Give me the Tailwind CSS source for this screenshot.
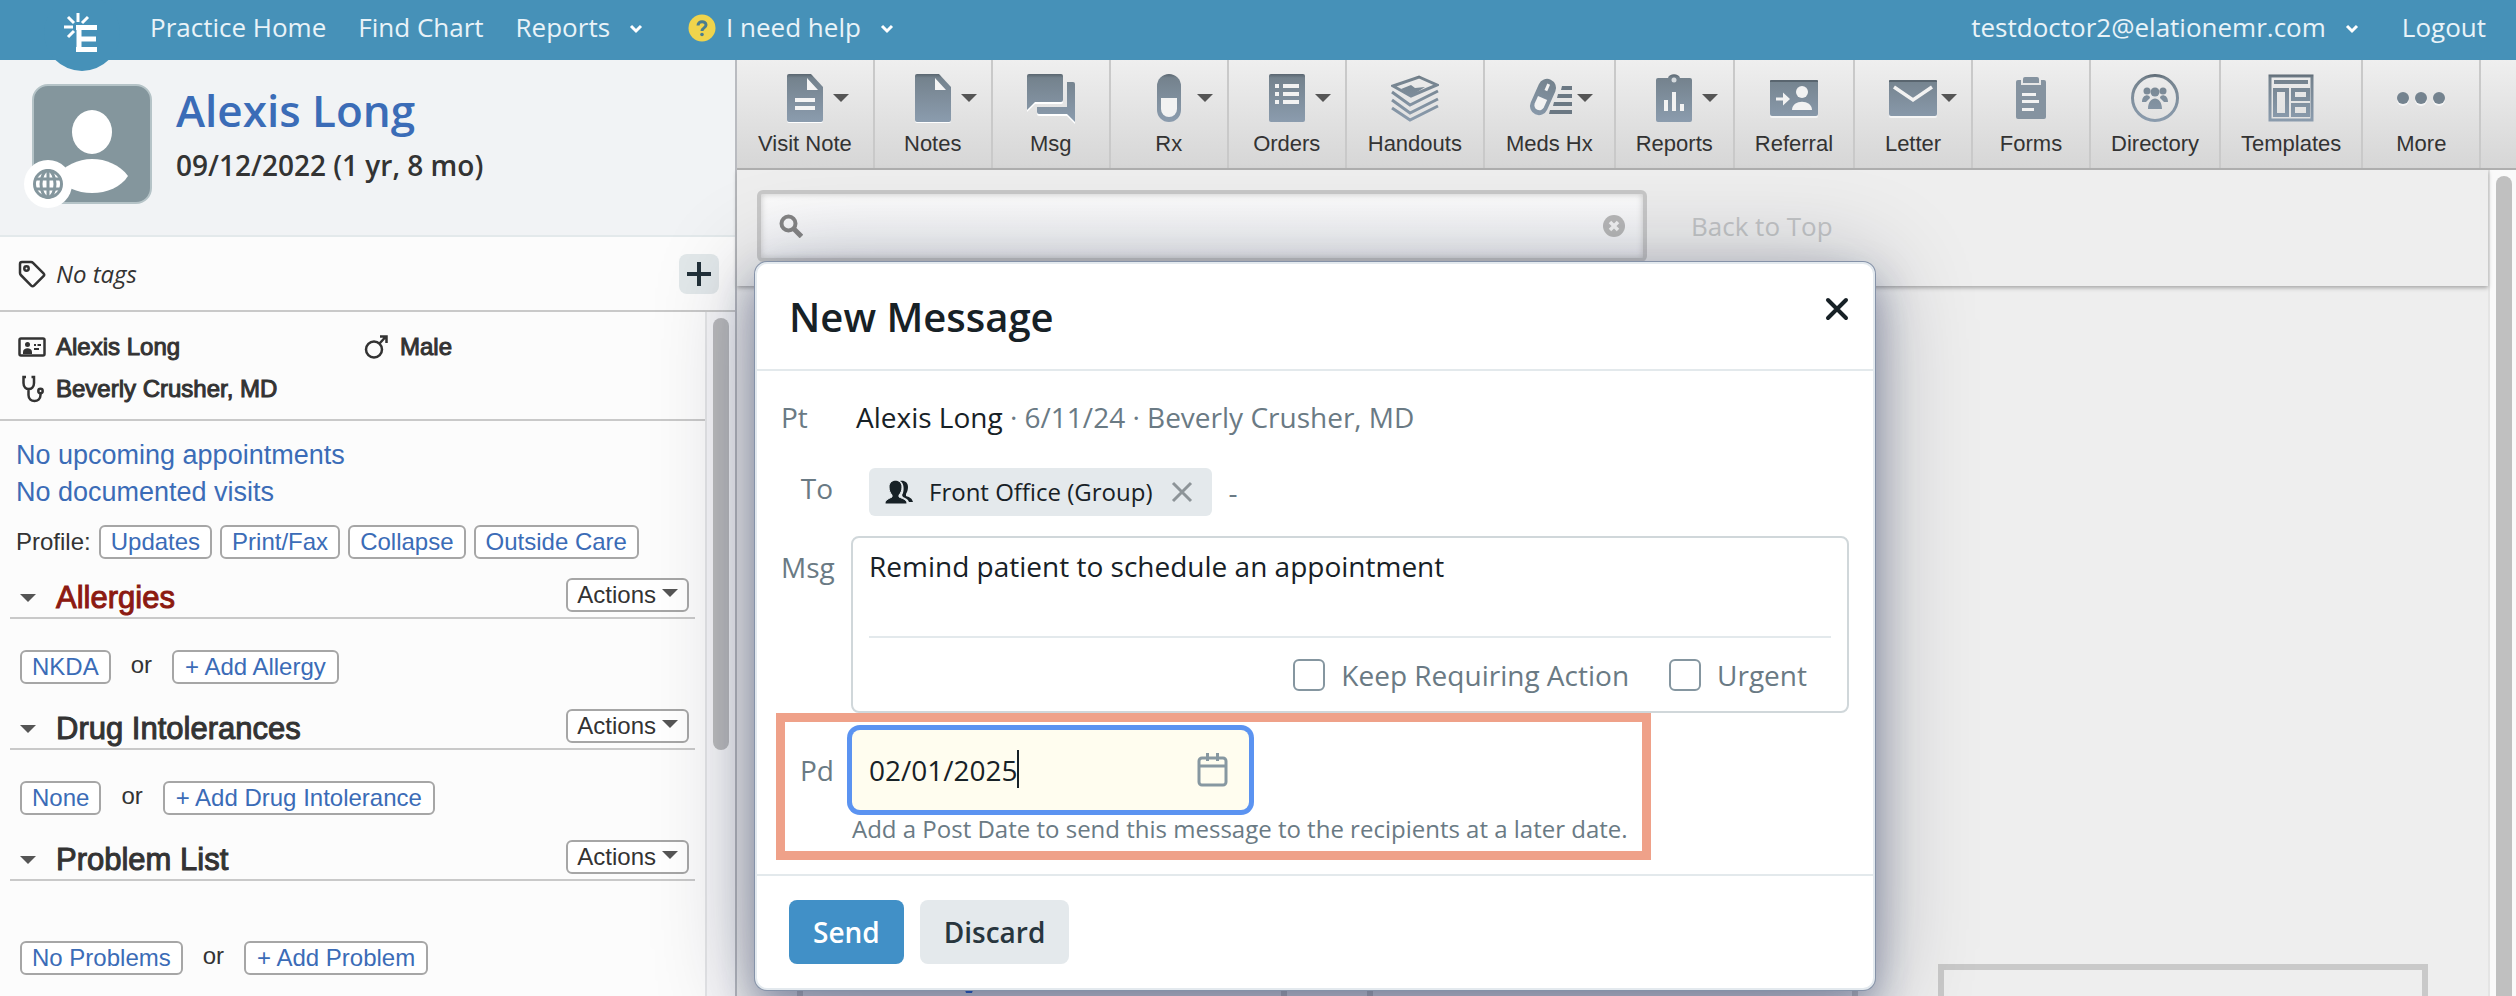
<!DOCTYPE html>
<html lang="en">
<head>
  <meta charset="UTF-8">
  <meta name="viewport" content="width=device-width, initial-scale=1.0">
  <title>Alexis Long - New Message</title>
  <script src="https://cdn.jsdelivr.net/npm/@tailwindcss/browser@4"></script>
</head>
<body class="flex flex-col h-screen overflow-hidden bg-[#eeeeee] font-['Liberation_Sans',Arial,sans-serif] text-[#333333]">

  <!-- shared icon gradient -->
  <svg class="absolute w-0 h-0" aria-hidden="true">
    <defs>
      <linearGradient id="steel" gradientUnits="userSpaceOnUse" x1="0" y1="0" x2="0" y2="48">
        <stop offset="0" stop-color="#59656f"/>
        <stop offset="0.08" stop-color="#74828d"/>
        <stop offset="1" stop-color="#8b9cae"/>
      </linearGradient>
    </defs>
  </svg>

  <!-- Top bar -->
  <header class="relative z-10 flex items-center justify-between h-15 shrink-0 bg-[#4691b8] pb-1.5 pr-[30px] pl-[150px] font-['Open_Sans',sans-serif] text-[26px] text-[#e9f3f8]">
    <a href="#" aria-label="Home" class="absolute left-11 -top-[5px] size-[76px] rounded-full bg-[#4691b8]">
      <svg class="size-full" viewBox="0 0 76 76" fill="none" stroke="#fff">
        <path d="M35 57V30M32 32.500h21M35 44h17M32 54.500h21" stroke-width="5"/>
        <path d="M34 18v9M24 22l6 6M44 22l-6 6M20 32h9M30 36l-6 6" stroke-width="3"/>
      </svg>
    </a>
    <nav class="flex items-center">
      <a href="#">Practice Home</a>
      <a href="#" class="ml-8">Find Chart</a>
      <a href="#" class="ml-8 flex items-center">Reports
        <svg class="ml-[18px] mt-1 w-4 h-3" viewBox="0 0 16 12" fill="none" stroke="#fff" stroke-width="3"><path d="M3 3l5 5 5-5"/></svg>
      </a>
      <a href="#" class="ml-11 flex items-center">
        <svg class="mt-0.5 mr-2.5 size-7" viewBox="0 0 28 28"><circle cx="14" cy="14" r="13.5" fill="#f0d44c"/><path d="M10 11.5c0-5 8-5 8-.5 0 3-4 2.800-4 6" fill="none" stroke="#4b7d8f" stroke-width="3"/><circle cx="14" cy="20.500" r="1.800" fill="#4b7d8f"/></svg>
        I need help
        <svg class="ml-[18px] mt-1 w-4 h-3" viewBox="0 0 16 12" fill="none" stroke="#fff" stroke-width="3"><path d="M3 3l5 5 5-5"/></svg>
      </a>
    </nav>
    <nav class="flex items-center">
      <a href="#" class="flex items-center">testdoctor2@elationemr.com
        <svg class="ml-[18px] mt-1 w-4 h-3" viewBox="0 0 16 12" fill="none" stroke="#fff" stroke-width="3"><path d="M3 3l5 5 5-5"/></svg>
      </a>
      <a href="#" class="ml-[42px]">Logout</a>
    </nav>
  </header>

  <div class="flex flex-1 min-h-0">

    <!-- Patient sidebar -->
    <aside class="flex flex-col w-[737px] shrink-0 bg-[#fcfcfc] border-r-2 border-[#b9bbc0]">
      <div class="flex h-[177px] shrink-0 bg-[#f1f3f5] border-b-2 border-[#e3e9eb] pt-6 pl-8">
        <div class="relative size-[120px]">
          <svg class="size-full" viewBox="0 0 120 120">
            <rect x="1" y="1" width="118" height="118" rx="15" fill="#84969d" stroke="#b5c3c7" stroke-width="2"/>
            <ellipse cx="60" cy="48" rx="20" ry="22" fill="#fff"/>
            <path d="M24 92c8-10 22-17 36-17s28 6 36 17c-7 11-21 17-36 17s-28-6-36-17z" fill="#fff"/>
          </svg>
          <svg class="absolute -left-2 top-[76px] size-12" viewBox="0 0 48 48" fill="none" stroke="#84969d" stroke-width="3">
            <circle cx="24" cy="24" r="24" fill="#fff" stroke="none"/>
            <circle cx="24" cy="24" r="13.500"/><ellipse cx="24" cy="24" rx="7" ry="13.500"/><path d="M11 19h26M11 29h26M24 10v28"/>
          </svg>
        </div>
        <div class="ml-6 font-['Open_Sans',sans-serif] font-semibold">
          <h1 class="text-[44px] leading-[52px] text-[#3b6cb7]">Alexis Long</h1>
          <p class="mt-[11px] text-[28px] leading-9">09/12/2022 (1 yr, 8 mo)</p>
        </div>
      </div>

      <div class="flex items-center h-[75px] shrink-0 border-b-2 border-[#c9c9c9] pl-[18px] pr-4 font-['Open_Sans',sans-serif]">
        <svg class="size-7" viewBox="0 0 28 28" fill="none" stroke="#333" stroke-width="2.500"><path d="M2 4a2 2 0 0 1 2-2h9c1 0 1.500.3 2 .8l10.500 10.500a2 2 0 0 1 0 2.800l-9.500 9.500a2 2 0 0 1-2.800 0L2.800 15C2.300 14.500 2 14 2 13z"/><circle cx="8.500" cy="8.500" r="2.200"/></svg>
        <span class="ml-2.5 flex-1 text-[24px] italic">No tags</span>
        <button type="button" aria-label="Add tag" class="flex items-center justify-center size-10 rounded-lg bg-[#e2e8ea]">
          <svg class="size-6" viewBox="0 0 24 24" stroke="#22313a" stroke-width="4"><path d="M12 0v24M0 12h24"/></svg>
        </button>
      </div>

      <div class="flex flex-1 min-h-0">
        <div class="flex-1 overflow-hidden">
          <div class="grid grid-cols-[346px_1fr] border-b-2 border-[#c9c9c9] pt-3.5 pb-[9px] pl-[18px] text-[24px] leading-[42px] [-webkit-text-stroke:1px_#333333]">
            <div class="flex items-center gap-2.5">
              <svg class="w-7 h-5" viewBox="0 0 28 20" fill="none" stroke="#333" stroke-width="2.500"><rect x="1.500" y="1.500" width="25" height="17" rx="1.500"/><circle cx="9.500" cy="7.500" r="2.500" fill="#333" stroke="none"/><path d="M5 17v-2c0-5 9-5 9 0v2z" fill="#333" stroke="none"/><path d="M16 8h2M19.500 8H23M16 12h5" stroke-width="2"/></svg>
              Alexis Long
            </div>
            <div class="flex items-center gap-3">
              <svg class="size-6" viewBox="0 0 24 24" fill="none" stroke="#333" stroke-width="2.500"><circle cx="10" cy="14.500" r="8"/><path d="M15.500 8.500l6.500-7M16 1.500h6.500V8"/></svg>
              Male
            </div>
            <div class="flex items-center gap-2.5">
              <svg class="size-7" viewBox="0 0 28 28" fill="none" stroke="#333" stroke-width="2.500"><path d="M8 2H5.500v6c0 8 10.500 8 10.500 0V2H13.500M10.500 14v6c0 8 12 8 12 0v-2"/><circle cx="22.500" cy="16" r="2.200"/></svg>
              Beverly Crusher, MD
            </div>
          </div>

          <div class="flex flex-col items-start pt-4 pl-4 text-[27px] leading-[37px] text-[#3b6cb7]">
            <a href="#">No upcoming appointments</a>
            <a href="#">No documented visits</a>
          </div>
          <div class="mt-3.5 pl-4 flex items-center gap-2 text-[24px] leading-[30px]">
            <span>Profile:</span>
            <button type="button" class="h-[34px] px-2.5 border-2 border-[#a6a6a6] rounded-md bg-white text-[#3b6cb7]">Updates</button>
            <button type="button" class="h-[34px] px-2.5 border-2 border-[#a6a6a6] rounded-md bg-white text-[#3b6cb7]">Print/Fax</button>
            <button type="button" class="h-[34px] px-2.5 border-2 border-[#a6a6a6] rounded-md bg-white text-[#3b6cb7]">Collapse</button>
            <button type="button" class="h-[34px] px-2.5 border-2 border-[#a6a6a6] rounded-md bg-white text-[#3b6cb7]">Outside Care</button>
          </div>

          <section class="mt-[19px] mx-2.5 text-[24px] leading-[30px]">
            <div class="flex items-center h-[41px] border-b-2 border-[#c9c9c9] pl-2.5 pr-1.5">
              <svg class="w-4 h-2" viewBox="0 0 16 8"><path d="M0 0h16L8 8z" fill="#555"/></svg>
              <h2 class="ml-5 flex-1 text-[31px] text-[#8c1a11] [-webkit-text-stroke:1px_#8c1a11]">Allergies</h2>
              <button type="button" class="self-start flex items-center h-[34px] px-[9px] border-2 border-[#a6a6a6] rounded-md bg-white">Actions
                <svg class="ml-1.5 mb-1 w-4 h-2" viewBox="0 0 16 8"><path d="M0 0h16L8 8z" fill="#555"/></svg>
              </button>
            </div>
            <div class="mt-[31px] pl-2.5 flex items-center gap-5">
              <button type="button" class="h-[34px] px-2.5 border-2 border-[#a6a6a6] rounded-md bg-white text-[#3b6cb7]">NKDA</button>
              <span class="pb-1">or</span>
              <button type="button" class="h-[34px] px-[11px] border-2 border-[#a6a6a6] rounded-md bg-white text-[#3b6cb7]">+ Add Allergy</button>
            </div>
          </section>

          <section class="mt-[25px] mx-2.5 text-[24px] leading-[30px]">
            <div class="flex items-center h-[41px] border-b-2 border-[#c9c9c9] pl-2.5 pr-1.5">
              <svg class="w-4 h-2" viewBox="0 0 16 8"><path d="M0 0h16L8 8z" fill="#555"/></svg>
              <h2 class="ml-5 flex-1 text-[31px] [-webkit-text-stroke:1px_#333333]">Drug Intolerances</h2>
              <button type="button" class="self-start flex items-center h-[34px] px-[9px] border-2 border-[#a6a6a6] rounded-md bg-white">Actions
                <svg class="ml-1.5 mb-1 w-4 h-2" viewBox="0 0 16 8"><path d="M0 0h16L8 8z" fill="#555"/></svg>
              </button>
            </div>
            <div class="mt-[31px] pl-2.5 flex items-center gap-5">
              <button type="button" class="h-[34px] px-2.5 border-2 border-[#a6a6a6] rounded-md bg-white text-[#3b6cb7]">None</button>
              <span class="pb-1">or</span>
              <button type="button" class="h-[34px] px-[11px] border-2 border-[#a6a6a6] rounded-md bg-white text-[#3b6cb7]">+ Add Drug Intolerance</button>
            </div>
          </section>

          <section class="mt-[25px] mx-2.5 text-[24px] leading-[30px]">
            <div class="flex items-center h-[41px] border-b-2 border-[#c9c9c9] pl-2.5 pr-1.5">
              <svg class="w-4 h-2" viewBox="0 0 16 8"><path d="M0 0h16L8 8z" fill="#555"/></svg>
              <h2 class="ml-5 flex-1 text-[31px] [-webkit-text-stroke:1px_#333333]">Problem List</h2>
              <button type="button" class="self-start flex items-center h-[34px] px-[9px] border-2 border-[#a6a6a6] rounded-md bg-white">Actions
                <svg class="ml-1.5 mb-1 w-4 h-2" viewBox="0 0 16 8"><path d="M0 0h16L8 8z" fill="#555"/></svg>
              </button>
            </div>
            <div class="mt-[60px] pl-2.5 flex items-center gap-5">
              <button type="button" class="h-[34px] px-2.5 border-2 border-[#a6a6a6] rounded-md bg-white text-[#3b6cb7]">No Problems</button>
              <span class="pb-1">or</span>
              <button type="button" class="h-[34px] px-[11px] border-2 border-[#a6a6a6] rounded-md bg-white text-[#3b6cb7]">+ Add Problem</button>
            </div>
          </section>
        </div>
        <!-- sidebar scrollbar -->
        <div class="w-[30px] border-l-2 border-[#e4e5e7] bg-[#f6f6f8] pt-1.5 pl-1.5">
          <div class="w-4 h-[432px] rounded-full bg-[#bbbbbd]"></div>
        </div>
      </div>
    </aside>

    <!-- Chart area -->
    <main class="flex flex-col flex-1 min-w-0">
      <div class="flex h-[110px] shrink-0 border-b-2 border-[#afafaf] bg-linear-to-b from-[#efefef] to-[#d6d6d6] text-[22px] leading-[26px]">
        <button type="button" class="flex flex-col items-center gap-[9px] pt-3.5 px-[21px] min-w-[118px] border-r-2 border-[#c9c9c9]">
          <span class="relative size-12">
            <svg class="size-12 drop-shadow-[0_1px_0_#ffffff]" viewBox="0 0 48 48"><path d="M6 2a2 2 0 0 1 2-2h22l12 13v33a2 2 0 0 1-2 2H8a2 2 0 0 1-2-2z" fill="url(#steel)"/><path d="M26 4v12h11zM14 24h20v4H14zM14 32h20v4H14z" fill="#f4f4f4"/></svg>
            <svg class="absolute left-[52px] top-5 w-4 h-2" viewBox="0 0 16 8"><path d="M0 0h16L8 8z" fill="#555"/></svg>
          </span>
          Visit Note
        </button>
        <button type="button" class="flex flex-col items-center gap-[9px] pt-3.5 px-[21px] min-w-[118px] border-r-2 border-[#c9c9c9]">
          <span class="relative size-12">
            <svg class="size-12 drop-shadow-[0_1px_0_#ffffff]" viewBox="0 0 48 48"><path d="M6 2a2 2 0 0 1 2-2h22l12 13v33a2 2 0 0 1-2 2H8a2 2 0 0 1-2-2z" fill="url(#steel)"/><path d="M26 4v12h11z" fill="#f4f4f4"/></svg>
            <svg class="absolute left-[52px] top-5 w-4 h-2" viewBox="0 0 16 8"><path d="M0 0h16L8 8z" fill="#555"/></svg>
          </span>
          Notes
        </button>
        <button type="button" class="flex flex-col items-center gap-[9px] pt-3.5 px-[21px] min-w-[118px] border-r-2 border-[#c9c9c9]">
          <svg class="size-12 drop-shadow-[0_2px_0_#ffffff]" viewBox="0 0 48 48"><path d="M2 0h32a2 2 0 0 1 2 2v24a2 2 0 0 1-2 2H8l-8 8V2a2 2 0 0 1 2-2zM40 8h6a2 2 0 0 1 2 2v38l-8-8H12a2 2 0 0 1-2-2v-5h30z" fill="url(#steel)"/></svg>
          Msg
        </button>
        <button type="button" class="flex flex-col items-center gap-[9px] pt-3.5 px-[21px] min-w-[118px] border-r-2 border-[#c9c9c9]">
          <span class="relative size-12">
            <svg class="size-12" viewBox="0 0 48 48"><rect x="12" y="0" width="24" height="48" rx="12" fill="url(#steel)"/><path d="M16 24h16v11a8 8 0 0 1-16 0z" fill="#f2f2f2"/></svg>
            <svg class="absolute left-[52px] top-5 w-4 h-2" viewBox="0 0 16 8"><path d="M0 0h16L8 8z" fill="#555"/></svg>
          </span>
          Rx
        </button>
        <button type="button" class="flex flex-col items-center gap-[9px] pt-3.5 px-[21px] min-w-[118px] border-r-2 border-[#c9c9c9]">
          <span class="relative size-12">
            <svg class="size-12" viewBox="0 0 48 48"><rect x="6" y="0" width="36" height="48" rx="2" fill="url(#steel)"/><path d="M12 10h4v4h-4zM20 10h16v4H20zM12 18h4v4h-4zM20 18h16v4H20zM12 26h4v4h-4zM20 26h16v4H20z" fill="#f2f2f2"/></svg>
            <svg class="absolute left-[52px] top-5 w-4 h-2" viewBox="0 0 16 8"><path d="M0 0h16L8 8z" fill="#555"/></svg>
          </span>
          Orders
        </button>
        <button type="button" class="flex flex-col items-center gap-[9px] pt-3.5 px-[21px] min-w-[118px] border-r-2 border-[#c9c9c9]">
          <svg class="size-12" viewBox="0 0 48 48" fill="none" stroke="url(#steel)" stroke-width="3"><path d="M2 12L28 3l18 8-26 11z"/><path d="M10 15l10-4 4 3 10-1-14 9z" fill="url(#steel)" stroke="none"/><path d="M1 18l18 13 28-14M1 26l18 13 28-14M1 34l18 12 28-14"/></svg>
          Handouts
        </button>
        <button type="button" class="flex flex-col items-center gap-[9px] pt-3.5 px-[21px] min-w-[118px] border-r-2 border-[#c9c9c9]">
          <span class="relative size-12">
            <svg class="size-12" viewBox="0 0 48 48"><g transform="rotate(24 18 23)"><rect x="9" y="4" width="18" height="38" rx="9" fill="url(#steel)"/><path d="M13 24h10v8a5 5 0 0 1-10 0z" fill="#f2f2f2"/><path d="M18 9v7" stroke="#f2f2f2" stroke-width="3"/></g><path d="M37 12h10v4H36zM33 20h14v4H32zM29 28h18v4H28zM25 36h22v4H24z" fill="#6b7883"/></svg>
            <svg class="absolute left-[52px] top-5 w-4 h-2" viewBox="0 0 16 8"><path d="M0 0h16L8 8z" fill="#555"/></svg>
          </span>
          Meds Hx
        </button>
        <button type="button" class="flex flex-col items-center gap-[9px] pt-3.5 px-5 min-w-[118px] border-r-2 border-[#c9c9c9]">
          <span class="relative size-12">
            <svg class="size-12" viewBox="0 0 48 48"><path d="M8 4h10c1-5 11-5 12 0h10a2 2 0 0 1 2 2v40a2 2 0 0 1-2 2H8a2 2 0 0 1-2-2V6a2 2 0 0 1 2-2z" fill="url(#steel)"/><circle cx="24" cy="6" r="2.500" fill="#d5dade"/><path d="M14 26h4v11h-4zM22 18h4v19h-4zM30 30h4v7h-4z" fill="#f2f2f2"/></svg>
            <svg class="absolute left-[52px] top-5 w-4 h-2" viewBox="0 0 16 8"><path d="M0 0h16L8 8z" fill="#555"/></svg>
          </span>
          Reports
        </button>
        <button type="button" class="flex flex-col items-center gap-[9px] pt-3.5 px-5 min-w-[118px] border-r-2 border-[#c9c9c9]">
          <svg class="size-12 drop-shadow-[0_2px_0_#f5f5f5]" viewBox="0 0 48 48"><rect x="0" y="6" width="48" height="36" rx="2" fill="url(#steel)"/><path d="M0 7a1 1 0 0 1 1-1h46a1 1 0 0 1 1 1v1H0z" fill="#59656f"/><circle cx="32" cy="18" r="6" fill="#f2f2f2"/><path d="M22 36c0-11 20-11 20 0z" fill="#f2f2f2"/><path d="M6 23.500h7v-5l7 6.500-7 6.500v-5H6z" fill="#f2f2f2"/></svg>
          Referral
        </button>
        <button type="button" class="flex flex-col items-center gap-[9px] pt-3.5 px-5 min-w-[118px] border-r-2 border-[#c9c9c9]">
          <span class="relative size-12">
            <svg class="size-12 drop-shadow-[0_2px_0_#f5f5f5]" viewBox="0 0 48 48"><rect x="0" y="6" width="48" height="36" rx="2" fill="url(#steel)"/><path d="M0 7a1 1 0 0 1 1-1h46a1 1 0 0 1 1 1v1H0z" fill="#59656f"/><path d="M5 13l19 13 19-13" fill="none" stroke="#f2f2f2" stroke-width="3.500"/></svg>
            <svg class="absolute left-[52px] top-5 w-4 h-2" viewBox="0 0 16 8"><path d="M0 0h16L8 8z" fill="#555"/></svg>
          </span>
          Letter
        </button>
        <button type="button" class="flex flex-col items-center gap-[9px] pt-3.5 px-5 min-w-[118px] border-r-2 border-[#c9c9c9]">
          <svg class="size-12" viewBox="0 0 48 48"><path d="M11 6h26a2 2 0 0 1 2 2v35a2 2 0 0 1-2 2H11a2 2 0 0 1-2-2V8a2 2 0 0 1 2-2z" fill="#8593a0"/><path d="M14 6h20v5H14z" fill="#e6e6e6"/><path d="M18 3h12a2 2 0 0 1 2 2v4H16V5a2 2 0 0 1 2-2z" fill="#8593a0"/><path d="M15 19h14v3H15zM15 26h17v3H15zM15 34h12v3H15z" fill="#f2f2f2"/></svg>
          Forms
        </button>
        <button type="button" class="flex flex-col items-center gap-[9px] pt-3.5 px-5 min-w-[118px] border-r-2 border-[#c9c9c9]">
          <svg class="size-12" viewBox="0 0 48 48" fill="url(#steel)"><circle cx="24" cy="24" r="22.500" fill="none" stroke="url(#steel)" stroke-width="3"/><circle cx="24" cy="18" r="4.500"/><circle cx="16" cy="17" r="3.500"/><circle cx="32" cy="17" r="3.500"/><path d="M17 35c0-14 14-14 14 0zM11 28c0-8 8-8 8-4l-4 4zM37 28c0-8-8-8-8-4l4 4z"/></svg>
          Directory
        </button>
        <button type="button" class="flex flex-col items-center gap-[9px] pt-3.5 px-5 min-w-[118px] border-r-2 border-[#c9c9c9]">
          <svg class="size-12" viewBox="0 0 48 48" fill="none" stroke="url(#steel)" stroke-width="3"><path d="M3 2h42v44H3z"/><path d="M7 8.100L41 8" stroke-width="4"/><path d="M8 16h12v25H8zM26 16h15v9H26zM26 31h15v10H26z" stroke-width="4"/></svg>
          Templates
        </button>
        <button type="button" class="flex flex-col items-center gap-[9px] pt-3.5 px-5 min-w-[118px] border-r-2 border-[#c9c9c9]">
          <svg class="size-12 drop-shadow-[0_2px_0_#f5f5f5]" viewBox="0 0 48 48" fill="#74838f"><circle cx="6" cy="24" r="6"/><circle cx="24" cy="24" r="6"/><circle cx="42" cy="24" r="6"/></svg>
          More
        </button>
      </div>

      <div class="flex flex-1 min-h-0">
        <div class="relative flex-1 flex flex-col">
          <!-- search strip -->
          <div class="flex h-[116px] shrink-0 pt-5 pl-5 shadow-[0_2px_4px_#a8a8a8]">
            <div class="flex items-center w-[890px] h-[72px] border-4 border-[#c8c8c8] rounded-md bg-linear-to-b from-[#fcfcfc] to-[#f1f2f5] shadow-[inset_0_0_6px_#c8c8c8] px-[18px]">
              <svg class="size-6" viewBox="0 0 24 24" fill="none" stroke="#858585" stroke-width="4"><circle cx="9.500" cy="9.500" r="7"/><path d="M14.500 14.500l8 8" stroke-width="5"/></svg>
              <input type="search" aria-label="Search chart" class="flex-1 h-full px-3 text-[26px] outline-none">
              <button type="button" aria-label="Clear search">
                <svg class="size-[22px]" viewBox="0 0 22 22"><circle cx="11" cy="11" r="11" fill="#b9b9b9"/><path d="M7 7l8 8M15 7l-8 8" stroke="#f4f4f4" stroke-width="3.500"/></svg>
              </button>
            </div>
            <a href="#" class="ml-11 mt-[18px] font-['Open_Sans',sans-serif] text-[26px] leading-9 text-[#c3c5c6]">Back to Top</a>
          </div>

          <!-- note cards, mostly below the fold -->
          <div class="flex-1 grid grid-cols-3 gap-20 px-15 pt-[678px] min-h-0 overflow-hidden">
            <div class="h-40 border-6 border-[#c9c9c9] pt-2 pl-[158px]">
              <svg class="w-4 h-4" viewBox="0 0 16 16"><path d="M0 0h16L11 15H5z" fill="#2f6bd8"/></svg>
            </div>
            <div class="h-40 border-6 border-[#c9c9c9]"></div>
            <div class="h-40 border-6 border-[#c9c9c9]"></div>
          </div>

          <!-- New message dialog -->
          <form role="dialog" aria-labelledby="dialog-title" class="absolute left-[18px] top-[92px] w-[1120px] rounded-xl border-2 border-[#e3e9ee] bg-white font-['Open_Sans',sans-serif] text-[28px] leading-10 text-[#6a7a84] shadow-[0_0_0_1px_#8592a8,0_20px_40px_rgba(20,35,90,0.4),0_8px_100px_rgba(10,15,40,0.3)]">
            <div class="flex items-center justify-between h-[107px] border-b-2 border-[#e3e9ec] pl-8 pr-6">
              <h2 id="dialog-title" class="text-[40px] font-semibold text-[#172126]">New Message</h2>
              <button type="button" aria-label="Close" class="pb-4">
                <svg class="size-6" viewBox="0 0 24 24" stroke="#172126" stroke-width="4" stroke-linecap="round"><path d="M3 3l18 18M21 3L3 21"/></svg>
              </button>
            </div>

            <div class="pt-[26px] px-6 pb-3.5">
              <div class="grid grid-cols-[52px_1fr] gap-x-[18px]">
                <span>Pt</span>
                <p class="pl-[5px]"><span class="text-[#172126]">Alexis Long</span> · 6/11/24 · Beverly Crusher, MD</p>
              </div>

              <div class="mt-[31px] grid grid-cols-[52px_1fr] gap-x-[18px]">
                <label for="to" class="text-right">To</label>
                <div class="flex items-center h-12 pl-[18px]">
                  <span class="flex items-center h-full rounded-md bg-[#e4e9ec] pl-4 pr-[18px] text-[24px] text-[#172126]">
                    <svg class="w-7 h-6" viewBox="0 0 28 24" fill="#172126"><path d="M15 1c4-1 8 1 8 6 0 3-1 5-2 7v2c3 1 6 2 7 6h-4c-1-3-4-4-6-5l-1-2c2-2 3-12-2-14z"/><path d="M0 24c0-4 3-5 7-7v-2C5 13 4 10 4 7c0-9 13-9 13 0 0 3-1 6-3 8v2c5 2 8 3 8 7z" stroke="#e4e9ec" stroke-width="1"/></svg>
                    <span class="ml-4">Front Office (Group)</span>
                    <button type="button" aria-label="Remove Front Office (Group)" class="ml-[18px]">
                      <svg class="size-6" viewBox="0 0 24 24" stroke="#8d9498" stroke-width="3"><path d="M3 3l18 18M21 3L3 21"/></svg>
                    </button>
                  </span>
                  <input id="to" type="text" value="-" class="ml-4 flex-1 outline-none">
                </div>
              </div>

              <div class="mt-5 grid grid-cols-[52px_1fr] gap-x-[18px]">
                <label for="msg" class="pt-[11px] text-right">Msg</label>
                <div class="border-2 border-[#d0d7da] rounded-lg px-4">
                  <textarea id="msg" class="block w-full h-[98px] resize-none pt-2 text-[#172126] outline-none">Remind patient to schedule an appointment</textarea>
                  <div class="flex items-center justify-end gap-10 h-[75px] border-t-2 border-[#e3e9ec] pr-6">
                    <label class="flex items-center gap-4"><input type="checkbox" class="appearance-none size-8 border-2 border-[#8596a0] rounded-md bg-white">Keep Requiring Action</label>
                    <label class="flex items-center gap-4"><input type="checkbox" class="appearance-none size-8 border-2 border-[#8596a0] rounded-md bg-white">Urgent</label>
                  </div>
                </div>
              </div>

              <!-- highlighted post date row -->
              <div class="w-fit -ml-[5px] border-9 border-[#efa189] pt-2 pr-3.5 pb-1.5 grid grid-cols-[49px_1fr] gap-x-[18px]">
                <label for="post-date" class="pt-5 text-right">Pd</label>
                <div>
                  <div class="relative flex items-center justify-between w-[397px] h-20 rounded-lg bg-[#fffdef] ring-5 ring-[#5b93f1] pl-[17px] pr-5">
                    <input id="post-date" type="text" value="02/01/2025" class="w-[200px] text-[#172126] outline-none">
                    <span class="absolute left-[165px] top-5 w-0.5 h-[38px] bg-[#172126]"></span>
                    <button type="button" aria-label="Pick a date">
                      <svg class="w-8 h-9" viewBox="0 0 32 36" fill="none" stroke="#8798a1" stroke-width="3"><rect x="2" y="6" width="27" height="27" rx="3"/><path d="M2 14h27M10.500 1v8M20.500 1v8"/></svg>
                    </button>
                  </div>
                  <p class="mt-[3px] text-[24px] leading-8">Add a Post Date to send this message to the recipients at a later date.</p>
                </div>
              </div>
            </div>

            <div class="flex gap-4 border-t-2 border-[#e3e9ec] p-6 pl-8 font-semibold">
              <button type="submit" class="h-16 px-6 rounded-lg bg-[#4190c7] text-white">Send</button>
              <button type="button" class="h-16 px-6 rounded-lg bg-[#e4e9ec] text-[#28363e]">Discard</button>
            </div>
          </form>
        </div>

        <!-- page scrollbar -->
        <div class="w-7 border-l-2 border-[#e4e4e4] bg-[#fafafa] pt-1.5 pl-1.5">
          <div class="w-4 h-full rounded-t-full bg-[#c0c0c0]"></div>
        </div>
      </div>
    </main>
  </div>
</body>
</html>
